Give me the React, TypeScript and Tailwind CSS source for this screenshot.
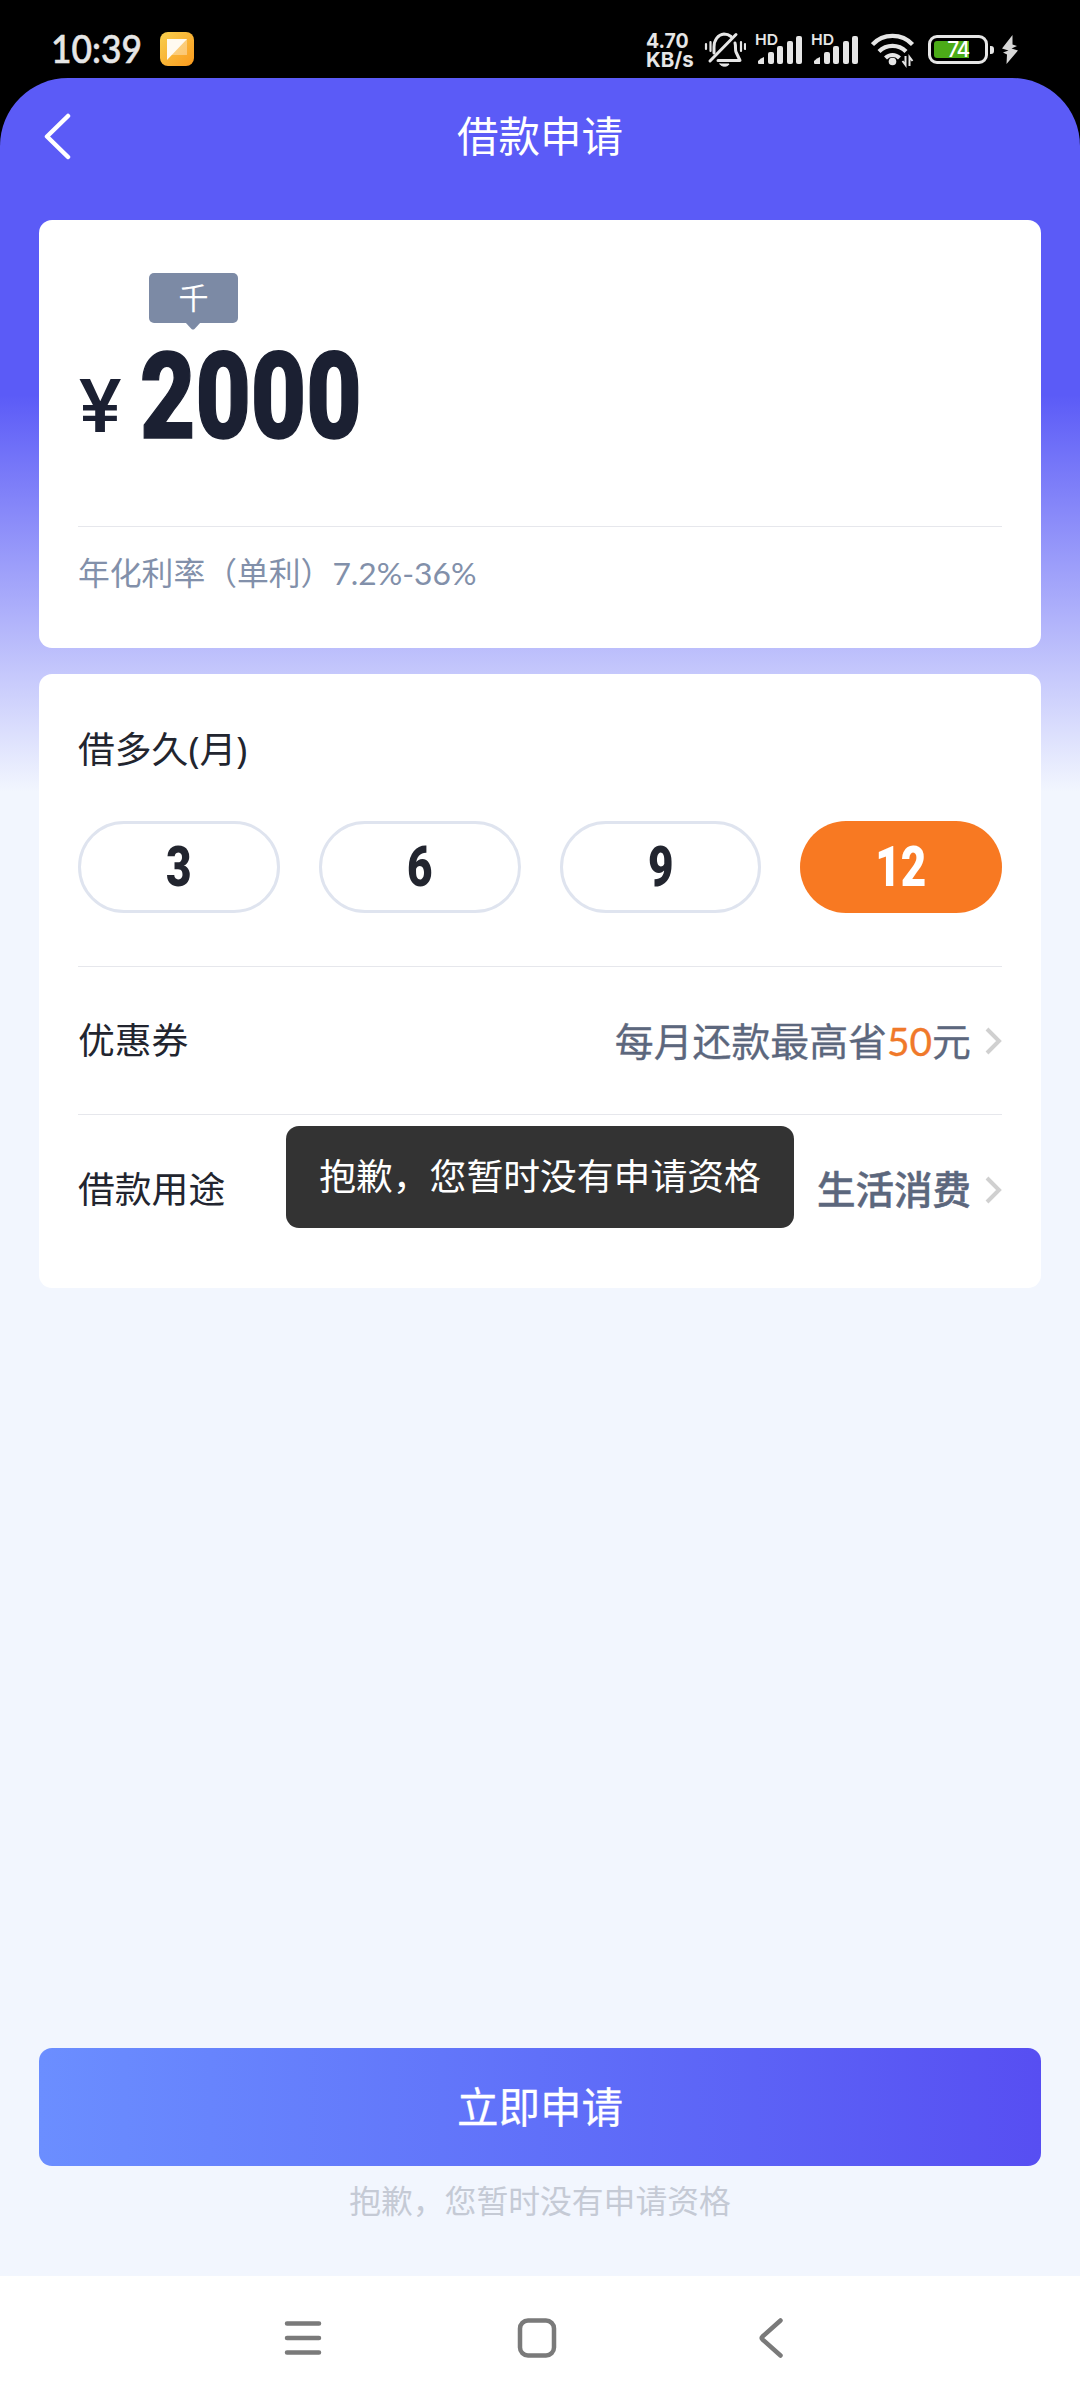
import React from "react";
import clsx from "clsx";

const TERMS = ["3", "6", "9", "12"];
const SELECTED = "12";

function StatusBar() {
  return (
    <div className="flex h-[78px] items-start bg-black pl-[51px] text-[#e6e6e6]">
      <div className="mt-[30px] w-[109px] font-[Lato] text-[38px] leading-[37px] font-medium whitespace-nowrap">
        <span className="inline-block origin-left scale-x-[0.93] [-webkit-text-stroke:0.6px_#e6e6e6]">10:39</span>
      </div>

      <svg className="mt-8 h-[34px] w-[34px]" viewBox="0 0 34 34">
        <defs>
          <linearGradient id="note" x1="0" y1="0" x2="1" y2="1">
            <stop offset="0" stopColor="#f7cf4e" />
            <stop offset="1" stopColor="#fb9a1d" />
          </linearGradient>
        </defs>
        <rect width="34" height="34" rx="8" fill="url(#note)" />
        <rect x="7" y="7" width="20" height="16" fill="#fff" opacity="0.35" />
        <path d="M7 7h20L7 28z" fill="#fffaf0" />
      </svg>

      <div className="mt-[31px] ml-[452px] w-[57px] font-[Inter] text-[20.5px] leading-[19px] font-bold whitespace-nowrap">
        <div className="origin-left scale-x-[0.95]">4.70</div>
        <div className="origin-left">KB/s</div>
      </div>

      {/* muted bell */}
      <svg className="mt-8 ml-[1px] h-9 w-[42px]" viewBox="0 0 42 36" fill="none" stroke="#e6e6e6" strokeWidth="3" strokeLinecap="round">
        <path d="M32 2.500 6 29" />
        <path d="M10 21V15c0-7 4-12.500 10-13 3 0 5 .8 7 2.500M31 11c1 3 0 7 1 9l4 8.500H14" strokeLinejoin="round" />
        <path d="M16 32h9c-1 3-8 3-9 0z" fill="#e6e6e6" strokeWidth="1" />
        <path d="M2 12v5M6.500 10v9M37 10v9M41 12v5" strokeWidth="2.200" />
      </svg>

      {[0, 1].map((i) => (
        <div key={i} className={clsx("relative mt-8 h-9 w-[48px]", i === 0 ? "ml-[9px]" : "ml-2")}>
          <span className="absolute -top-px left-0 origin-left scale-x-105 font-[Inter] text-[15px] leading-[18px] font-semibold">HD</span>
          <svg className="h-9 w-[48px]" viewBox="0 0 48 36" fill="#e6e6e6">
            <path d="M3 31v-2q3-3 6-4v7H4q-1 0-1-1z" />
            <rect x="13" y="20" width="6" height="12" rx="2" />
            <rect x="22" y="14" width="6" height="18" rx="2" />
            <rect x="32" y="9" width="6" height="23" rx="2" />
            <rect x="41" y="4" width="6" height="28" rx="2" />
          </svg>
        </div>
      ))}

      {/* wifi with traffic arrows */}
      <svg className="mt-8 ml-3 h-9 w-[44px]" viewBox="0 0 44 36" fill="none" stroke="#e6e6e6" strokeWidth="4.200">
        <path d="M1.500 12.500C12 1 31 1 41.500 12.500" />
        <path d="M8 19.500C15.500 12 27.500 12 35 19.500" />
        <path d="M14.500 26C18.500 22 24.500 22 28.500 26" />
        <circle cx="21.500" cy="29.500" r="3.800" fill="#e6e6e6" stroke="none" />
        <path d="M34.500 24v9l-3-4M38.500 34v-9l3 4" strokeWidth="2" />
      </svg>

      <div className="relative mt-[35px] ml-[13px] h-[29px] w-[60px] rounded-[9px] border-[3px] border-[#e6e6e6]">
        <div className="mt-[3px] ml-[3px] h-[17px] w-[35px] rounded-l-[3px] bg-[#4bab18]" />
        <span className="absolute inset-x-0 -top-px text-center font-[Inter] text-[21px] leading-[25px] font-medium tracking-[-1.5px] text-white">
          74
        </span>
      </div>
      <div className="mt-[46px] ml-[2px] h-[8px] w-[4px] rounded-r-[3px] bg-[#e6e6e6]" />
      <svg className="mt-[34px] ml-[7px] h-[31px] w-[18px]" viewBox="0 0 18 31" fill="#d8d8d8">
        <path d="M11.500 1 1 14.500 7.500 16.500 2 18.500 6 20.500 5.500 30 17 16.500 10.500 14.500 16 12 11.500 10.500z" />
      </svg>
    </div>
  );
}

function Chevron() {
  return (
    <svg className="ml-[13px] h-7 w-[18px]" viewBox="0 0 18 28" fill="none" stroke="#d0d0d0" strokeWidth="4">
      <path d="M3 2 15 14 3 26" />
    </svg>
  );
}

function AmountCard() {
  return (
    <section className="h-[428px] rounded-[13px] bg-white px-[39px] pt-[53px]">
      <div className="ml-[71px] flex w-[89px] flex-col items-center">
        <div className="h-[50px] w-full rounded-[5px] bg-[#7c8aa5] text-center text-[30px] leading-[49px] text-white">千</div>
        <svg className="-mt-px mr-[2px] h-2 w-4" viewBox="0 0 16 8" fill="#7c8aa5">
          <path d="M0 0h16L9.500 7q-1.500 1-3 0z" />
        </svg>
      </div>
      <div className="flex h-[137px] text-[#1b2032]">
        <span className="mt-[32px] w-[62px] pl-px font-[Roboto] text-[74px] leading-[90px] font-medium">
          <span className="inline-block origin-left scale-x-[1.08]">¥</span>
        </span>
        <span className="mt-[9px] origin-left scale-x-[0.797] font-[Roboto] text-[120px] leading-[116px] font-black [-webkit-text-stroke:1.5px_#1b2032]">
          2000
        </span>
      </div>
      <div className="mt-[59px] h-px bg-[#e6e7ec]" />
      <p className="mt-[26px] flex text-[31.8px] leading-[40px] text-[#8290aa]">
        年化利率（单利）<span className="font-[Lato]">7.2%-36%</span>
      </p>
    </section>
  );
}

function DetailsCard() {
  return (
    <section className="mt-[26px] h-[614px] rounded-[13px] bg-white px-[39px] pt-[50px] text-[#22252f]">
      <h2 className="h-[51px] text-[36.8px] leading-[50px]">借多久(月)</h2>

      <div className="mt-[46px] grid grid-cols-4 gap-[39px]">
        {TERMS.map((t) => (
          <button
            key={t}
            className={clsx(
              "h-[92px] rounded-full font-[Roboto] text-[55px] font-black",
              t === SELECTED ? "bg-[#f87922] text-white" : "border-[3px] border-[#dfe4ef]",
            )}
          >
            <span className="block scale-x-[0.8] leading-[82px]">{t}</span>
          </button>
        ))}
      </div>

      <div className="mt-[53px] h-px bg-[#e6e7ec]" />
      <div className="flex h-[147px] items-center pt-px">
        <span className="text-[36.8px]">优惠券</span>
        <span className="ml-auto flex items-center text-[38.900px] text-[#5c677d] [-webkit-text-stroke:0.3px]">
          每月还款最高省<span className="font-[Lato] text-[#f0792a]">50</span>元
        </span>
        <Chevron />
      </div>
      <div className="h-px bg-[#e6e7ec]" />
      <div className="flex h-[150px] items-center">
        <span className="text-[36.8px]">借款用途</span>
        <span className="ml-auto text-[38.500px] font-medium text-[#5c677d] [-webkit-text-stroke:0.5px]">生活消费</span>
        <Chevron />
      </div>
    </section>
  );
}

function NavBar() {
  return (
    <nav className="flex h-[124px] bg-white pt-[41px] pl-[283px]">
      <svg className="h-[42px] w-[40px]" viewBox="0 0 40 42" stroke="#7a7a7a" strokeWidth="4.500" strokeLinecap="round">
        <path d="M4 6.500h32M4 21h32M4 35.500h32" />
      </svg>
      <svg className="ml-[194px] h-[42px] w-[40px]" viewBox="0 0 40 42" fill="none" stroke="#7a7a7a" strokeWidth="4.500">
        <rect x="3" y="3.500" width="34" height="35" rx="8" />
      </svg>
      <svg className="ml-[201px] h-[42px] w-[26px]" viewBox="0 0 26 42" fill="none" stroke="#7a7a7a" strokeWidth="4.500" strokeLinecap="round" strokeLinejoin="round">
        <path d="M22.500 3.500 4.500 19.500q-1.500 1.500 0 3L22.500 38.500" />
      </svg>
    </nav>
  );
}

export default function App() {
  return (
    <div className="relative flex h-[2400px] w-[1080px] flex-col overflow-hidden bg-black font-['Noto_Sans','Noto_Sans_CJK_SC',sans-serif]">
      <StatusBar />

      <main className="flex flex-1 flex-col rounded-t-[68px] bg-[linear-gradient(180deg,#5b5bf7_0px,#5b5bf7_317px,#f2f6fe_714px)] px-[39px]">
        <header className="flex h-[142px] items-start pt-9">
          <svg className="mt-[-2px] ml-[3px] h-[48px] w-[30px]" viewBox="0 0 30 48" fill="none" stroke="#fff" strokeWidth="4.500" strokeLinecap="round" strokeLinejoin="round">
            <path d="M26 4 5 24.500 26 45" />
          </svg>
          <h1 className="mr-[33px] flex-1 text-center text-[41.5px] leading-[44px] text-white">借款申请</h1>
        </header>

        <AmountCard />
        <DetailsCard />

        <button className="mt-auto h-[118px] shrink-0 rounded-[13px] bg-linear-to-r from-[#6b8eff] to-[#574ef2] text-[41.5px] text-white [-webkit-text-stroke:0.3px]">
          立即申请
        </button>
        <p className="h-[110px] pt-[13px] text-center text-[31.8px] leading-[44px] text-[#c5cad5]">
          抱歉，您暂时没有申请资格
        </p>
      </main>

      <NavBar />

      {/* toast */}
      <div className="absolute top-[1126px] left-[286px] h-[102px] w-[508px] rounded-[13px] bg-[#333] text-center text-[36.8px] leading-[101px] whitespace-nowrap text-white">
        抱歉，您暂时没有申请资格
      </div>
    </div>
  );
}
